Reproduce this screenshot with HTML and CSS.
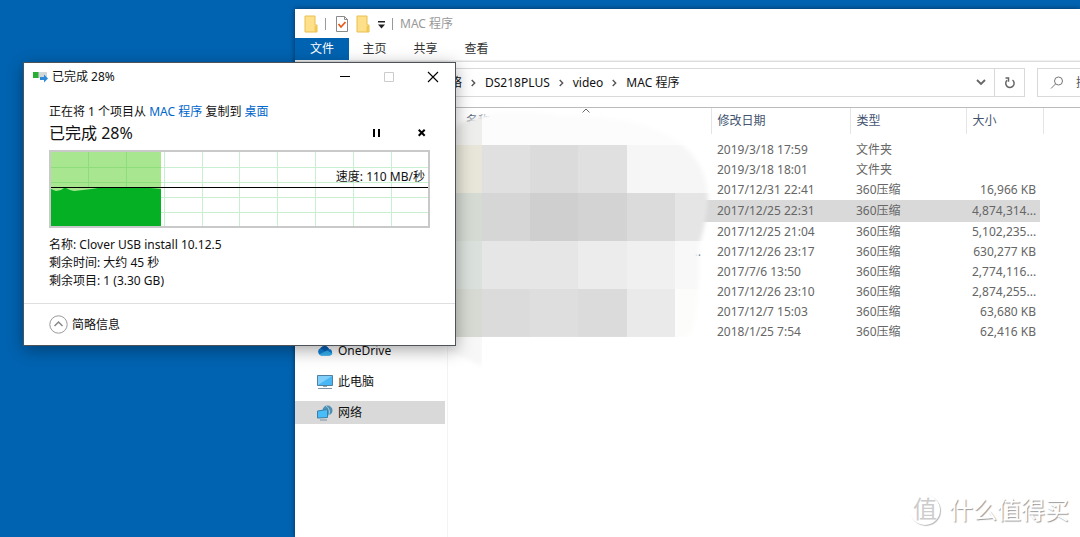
FILE: index.html
```html
<!DOCTYPE html>
<html lang="zh-CN">
<head>
<meta charset="utf-8">
<title>MAC 程序</title>
<link rel="stylesheet" href="styles.css">
</head>
<body>
<main class="desktop">
  <section class="explorer">
    <header class="titlebar">
      <svg class="folder" width="14" height="18" viewBox="0 0 14 18"><path d="M1 1h10v9h2v7H1z" fill="#ffe08a" stroke="#e8c04e"/><path d="M10.500 11h2.500v6h-2.500z" fill="#f2c94f"/></svg>
      <span class="bar"></span>
      <svg class="check" width="12" height="16" viewBox="0 0 12 16"><path d="M.5.5h8l3 3v12H.5z" fill="#fff" stroke="#8a8a8a"/><path d="M8.500.5v3h3" fill="none" stroke="#8a8a8a"/><path d="M2.500 8l2.500 3 4.500-5" fill="none" stroke="#e8591c" stroke-width="1.800"/></svg>
      <svg class="folder" width="14" height="18" viewBox="0 0 14 18"><path d="M1 1h10v9h2v7H1z" fill="#ffe08a" stroke="#e8c04e"/><path d="M10.500 11h2.500v6h-2.500z" fill="#f2c94f"/></svg>
      <svg class="more" width="7" height="8" viewBox="0 0 7 8"><path d="M0 0h7v1.500H0zM0 3.500h7L3.500 7.500z" fill="#222"/></svg>
      <span class="bar"></span>
      <span class="caption">MAC 程序</span>
    </header>
    <nav class="tabs">
      <button class="tab tab-file">文件</button>
      <button class="tab">主页</button>
      <button class="tab">共享</button>
      <button class="tab">查看</button>
    </nav>
    <div class="location">
      <div class="address">
        <button class="crumb">网络</button>
        <svg class="chev" width="5" height="8" viewBox="0 0 5 8"><path d="M.7 1l3 3-3 3" fill="none" stroke="#555" stroke-width="1.400"/></svg>
        <button class="crumb">DS218PLUS</button>
        <svg class="chev" width="5" height="8" viewBox="0 0 5 8"><path d="M.7 1l3 3-3 3" fill="none" stroke="#555" stroke-width="1.400"/></svg>
        <button class="crumb">video</button>
        <svg class="chev" width="5" height="8" viewBox="0 0 5 8"><path d="M.7 1l3 3-3 3" fill="none" stroke="#555" stroke-width="1.400"/></svg>
        <button class="crumb">MAC 程序</button>
        <button class="drop" aria-label="历史记录"><svg width="10" height="7" viewBox="0 0 10 7"><path d="M1 1l4 4 4-4" fill="none" stroke="#666" stroke-width="1.800"/></svg></button>
        <button class="refresh" aria-label="刷新"><svg width="12" height="13" viewBox="0 0 12 13"><path d="M3 3.800A4.200 4.200 0 1 0 8.500 3.500M1.500 1.500h3v3.700" transform="translate(0 .5)" fill="none" stroke="#666" stroke-width="1.500"/></svg></button>
      </div>
      <label class="search">
        <svg width="14" height="14" viewBox="0 0 14 14"><circle cx="8.500" cy="5" r="4" fill="none" stroke="#777"/><path d="M5.500 8L1 12.500" stroke="#777"/></svg>
        <input type="text" aria-label="搜索" placeholder="搜索">
      </label>
    </div>
    <div class="body">
      <aside class="side">
        <button class="place"><svg width="16" height="16" viewBox="0 0 16 16"><path d="M4 12.500a4 4 0 0 1-.5-7.500A5 5 0 0 1 12 6a3.300 3.300 0 0 1 .5 6.500z" fill="#0f7fd6"/><path d="M2 11.500l8-4 5.500 3a3 3 0 0 1-3 2H4z" fill="#35b1ee"/><path d="M3.500 5A5 5 0 0 1 12 6L8 8.200z" fill="#0a5fb4"/></svg>OneDrive</button>
        <button class="place"><svg width="16" height="16" viewBox="0 0 16 16"><path d="M.5 1.500h15v10H.5z" fill="#49b6f5" stroke="#52809f"/><path d="M1 2h14L1 11z" fill="#80d0fb"/><path d="M6 12h4v1H6z" fill="#8aa"/><path d="M1 14.500h14" stroke="#7d93a5"/></svg>此电脑</button>
        <button class="place place-on"><svg width="16" height="16" viewBox="0 0 16 16"><circle cx="10.500" cy="5.500" r="5" fill="#4f8fb3"/><path d="M9 1c3 2 4 5 3 9" stroke="#a9d6e8" fill="none"/><path d="M.5 6l10-1.500v8l-10 .5z" fill="#49bdf8" stroke="#3b7fa8"/><path d="M3 15h7" stroke="#7d93a5"/></svg>网络</button>
      </aside>
      <div class="files">
        <table>
          <colgroup><col class="c-name"><col class="c-date"><col class="c-type"><col class="c-size"></colgroup>
          <thead><tr><th>名称</th><th>修改日期</th><th>类型</th><th>大小</th></tr></thead>
          <tbody>
            <tr><td></td><td>2019/3/18 17:59</td><td>文件夹</td><td></td></tr>
            <tr><td></td><td>2019/3/18 18:01</td><td>文件夹</td><td></td></tr>
            <tr><td></td><td>2017/12/31 22:41</td><td>360压缩</td><td>16,966 KB</td></tr>
            <tr class="on"><td></td><td>2017/12/25 22:31</td><td>360压缩</td><td>4,874,314...</td></tr>
            <tr><td></td><td>2017/12/25 21:04</td><td>360压缩</td><td>5,102,235...</td></tr>
            <tr><td>..</td><td>2017/12/26 23:17</td><td>360压缩</td><td>630,277 KB</td></tr>
            <tr><td></td><td>2017/7/6 13:50</td><td>360压缩</td><td>2,774,116...</td></tr>
            <tr><td></td><td>2017/12/26 23:10</td><td>360压缩</td><td>2,874,255...</td></tr>
            <tr><td></td><td>2017/12/7 15:03</td><td>360压缩</td><td>63,680 KB</td></tr>
            <tr><td></td><td>2018/1/25 7:54</td><td>360压缩</td><td>62,416 KB</td></tr>
          </tbody>
        </table>
        <svg class="sort" width="8" height="5" viewBox="0 0 8 5"><path d="M.5 4.500L4 1l3.500 3.500" fill="none" stroke="#666"/></svg>
        <svg class="mosaic" width="264" height="260" viewBox="448 108 264 260">
          <defs>
            <filter id="soft" x="-5%" y="-5%" width="110%" height="110%"><feGaussianBlur stdDeviation="2"/></filter>
            <mask id="edge"><path d="M440 138Q462 118 495 112Q530 108 560 116Q640 114 680 143Q708 165 708 200Q706 225 699 245Q700 300 693 325Q690 340 675 340H483V366Q470 362 440 345z" fill="#fff" filter="url(#soft)"/></mask>
          </defs>
          <g mask="url(#edge)" shape-rendering="crispEdges">
            <path d="M448 108h34v37h-34z" fill="#eeeeed"/><path d="M482 108h230v37H482z" fill="#fcfcfc"/>
            <path d="M448 145h34v48h-34z" fill="#e8e6d9"/><path d="M482 145h48v48h-48zM578 145h49v48h-49z" fill="#e0e0e0"/><path d="M530 145h48v48h-48z" fill="#dbdbdb"/><path d="M627 145h85v48h-85z" fill="#f6f6f6"/>
            <path d="M448 193h34v48h-34z" fill="#d5dad3"/><path d="M482 193h48v48h-48z" fill="#d6d6d6"/><path d="M530 193h48v48h-48z" fill="#cfcfcf"/><path d="M578 193h49v48h-49z" fill="#d3d3d3"/><path d="M627 193h48v48h-48z" fill="#dbdbdb"/><path d="M675 193h37v48h-37z" fill="#e5e5e5"/>
            <path d="M448 241h34v48h-34z" fill="#dae0dc"/><path d="M482 241h96v48h-96z" fill="#e6e6e6"/><path d="M578 241h49v48h-49z" fill="#ececec"/><path d="M627 241h48v48h-48z" fill="#f0f0f0"/><path d="M675 241h37v48h-37z" fill="#f8f8f8"/>
            <path d="M448 289h34v48h-34z" fill="#d6dad2"/><path d="M482 289h48v48h-48zM578 289h49v48h-49z" fill="#dbdbdb"/><path d="M530 289h48v48h-48z" fill="#dedede"/><path d="M627 289h48v48h-48z" fill="#eaeaea"/><path d="M675 289h37v48h-37z" fill="#fcfcfa"/>
            <path d="M448 337h34v31h-34z" fill="#f7f7f7"/>
          </g>
        </svg>
      </div>
    </div>
  </section>

  <section class="dialog" role="dialog" aria-label="已完成 28%">
    <header class="dlg-title">
      <svg width="15" height="12" viewBox="0 0 15 12"><path d="M0 1h14v6H0z" fill="#d3d7da"/><path d="M0 1h5.500v6H0z" fill="#27b034"/><path d="M7 6h4V3.500l4 4-4 4V9H7z" fill="#2e8ad8"/></svg>
      <span class="dlg-name">已完成 28%</span>
      <button class="win" aria-label="最小化"><svg width="12" height="12" viewBox="0 0 12 12"><path d="M1 5.500h10" stroke="#000"/></svg></button>
      <button class="win" aria-label="最大化"><svg width="12" height="12" viewBox="0 0 12 12"><path d="M1.500 1.500h9v9h-9z" fill="none" stroke="#ccc"/></svg></button>
      <button class="win" aria-label="关闭"><svg width="12" height="12" viewBox="0 0 12 12"><path d="M1 1l10 10M11 1L1 11" stroke="#000" stroke-width="1.100"/></svg></button>
    </header>
    <div class="dlg-main">
      <p class="what">正在将 1 个项目从 <a href="#">MAC 程序</a> 复制到 <a href="#">桌面</a></p>
      <div class="progress">
        <h1>已完成 28%</h1>
        <button class="act" aria-label="暂停"><svg width="8" height="8" viewBox="0 0 8 8"><path d="M0 0h2v8H0zM5 0h2v8H5z" fill="#000"/></svg></button>
        <button class="act" aria-label="取消"><svg width="8" height="8" viewBox="0 0 8 8"><path d="M.7.7l6 6M6.700.7l-6 6" stroke="#000" stroke-width="2"/></svg></button>
      </div>
      <div class="chart">
        <svg viewBox="0 0 377 74" preserveAspectRatio="none">
          <path d="M37.500 0v74M75.500 0v74M113.500 0v74M151.500 0v74M188.500 0v74M226.500 0v74M264.500 0v74M302.500 0v74M340.500 0v74M0 15.500h377M0 30.500h377M0 45.500h377M0 60.500h377" stroke="#c8efcf"/>
          <path d="M0 0h110v74H0z" fill="#a8e690"/>
          <path d="M37.500 0v36M75.500 0v36M0 15.500h110M0 30.500h110" stroke="#8edd7c"/>
          <path d="M0 37l5 2 5-1 3-2h2l4 2 4 1 18-2 6-1h52l11 1v37H0z" fill="#06b025"/>
          <path d="M0 35.500h377" stroke="#000"/>
        </svg>
        <span class="speed">速度: 110 MB/秒</span>
      </div>
      <p class="info">名称: Clover USB install 10.12.5</p>
      <p class="info">剩余时间: 大约 45 秒</p>
      <p class="info">剩余项目: 1 (3.30 GB)</p>
    </div>
    <footer class="dlg-foot">
      <button class="less"><svg width="19" height="19" viewBox="0 0 19 19"><circle cx="9.500" cy="9.500" r="8.700" fill="#fff" stroke="#999"/><path d="M5.500 11l4-4 4 4" fill="none" stroke="#888" stroke-width="1.500"/></svg>简略信息</button>
    </footer>
  </section>

  <div class="mark"><span class="seal">值</span><span>什么值得买</span></div>
</main>
</body>
</html>
```

FILE: styles.css
```css
* { box-sizing: border-box; }
body {
  margin: 0;
  font: 12px/18px "Noto Sans", "Noto Sans CJK SC", sans-serif;
  color: #111;
}
button {
  font: inherit;
  color: inherit;
  background: none;
  border: 0;
  padding: 0;
}
svg { display: block; flex: none; }
p, h1 { margin: 0; }
.desktop {
  position: relative;
  height: 100vh;
  overflow: hidden;
  background: #0063b1;
}

.explorer {
  position: absolute;
  left: 295px;
  right: 0;
  top: 9px;
  bottom: 0;
  display: flex;
  flex-direction: column;
  background: #fff;
  box-shadow: 0 0 5px rgba(0, 0, 0, .5);
}
.titlebar {
  display: flex;
  align-items: center;
  height: 29px;
  padding-left: 9px;
}
.bar { width: 1px; height: 12px; background: #999; margin: 0 7px; }
.check { margin: 0 8px 0 3px; }
.more { margin: 2px 0 0 8px; }
.caption { color: #999; }
.tabs {
  display: flex;
  height: 23px;
  border-bottom: 1px solid #f0f0f0;
}
.tab { width: 51px; height: 22px; color: #333; }
.tab-file { width: 54px; background: #0063b1; color: #fff; }
.location {
  display: flex;
  gap: 12px;
  height: 46px;
  padding: 6px 0 0 110px;
  border-top: 1px solid #ddd;
}
.address {
  flex: 1;
  display: flex;
  align-items: center;
  height: 29px;
  padding-left: 32px;
  border: 1px solid #d9d9d9;
}
.chev { margin: 0 9px; }
.drop { margin-left: auto; padding: 8px; }
.refresh {
  display: flex;
  align-items: center;
  justify-content: center;
  width: 30px;
  height: 27px;
  border-left: 1px solid #d9d9d9;
}
.search {
  display: flex;
  align-items: center;
  gap: 12px;
  width: 43px;
  height: 29px;
  padding-left: 12px;
  border: 1px solid #d9d9d9;
  border-right: 0;
  overflow: hidden;
}
.search input {
  flex: none;
  width: 120px;
  border: 0;
  padding: 0;
  font: inherit;
}
.search input::placeholder { color: #555; opacity: 1; }
.body {
  flex: 1;
  display: flex;
}
.side {
  width: 153px;
  padding: 232px 2px 0 0;
  border-right: 1px solid #f3f3f3;
}
.place {
  display: flex;
  align-items: center;
  gap: 5px;
  width: 100%;
  height: 23px;
  margin-bottom: 8px;
  padding-left: 22px;
}
.place-on { background: #d9d9d9; }
.files {
  position: relative;
  flex: 1;
  border-top: 1px solid #bbb;
}
table {
  table-layout: fixed;
  width: 595px;
  border-collapse: collapse;
  line-height: 16px;
}
.c-name { width: 263px; }
.c-date { width: 139px; }
.c-type { width: 116px; }
.c-size { width: 77px; }
th, td { padding: 0 6px; text-align: left; font-weight: 400; }
th {
  height: 26px;
  color: #44546f;
  border-right: 1px solid #e5e5e5;
}
th:first-child { padding-left: 18px; }
tbody::before { content: ""; display: block; height: 6px; }
td { height: 20px; color: #666; }
td:first-child { text-align: right; padding-right: 10px; color: #223; }
td:last-child { text-align: right; padding-right: 7px; }
.on td { background: #d9d9d9; height: 22px; }
.on td:last-child {
  background: linear-gradient(to left, #fff 3px, #d9d9d9 3px);
}
.sort { position: absolute; left: 134px; top: 0; }
.mosaic { position: absolute; left: 0; top: 0; }

.dialog {
  position: absolute;
  left: 23px;
  top: 62px;
  width: 433px;
  background: #fff;
  border: 1px solid #4d5358;
  box-shadow: 0 4px 16px rgba(0, 0, 0, .35);
}
.dlg-title {
  display: flex;
  align-items: center;
  height: 28px;
  padding-left: 9px;
}
.dlg-name { flex: 1; padding-left: 4px; }
.win { display: flex; justify-content: center; width: 44px; }
.dlg-main { padding: 12px 25px 13px; }
.what { height: 18px; }
a { color: #0066cc; text-decoration: none; }
.progress {
  display: flex;
  align-items: center;
  height: 24px;
  margin-bottom: 5px;
}
h1 { flex: 1; font-size: 16px; line-height: 24px; font-weight: 400; }
.act { display: flex; justify-content: center; width: 8px; margin: 0 4px 0 33px; }
.chart {
  position: relative;
  height: 78px;
  margin-bottom: 8px;
  border: 2px solid #c9c9c9;
}
.chart svg { width: 100%; height: 100%; }
.speed { position: absolute; right: 3px; top: 16px; }
.info { height: 18px; }
.dlg-foot {
  height: 42px;
  padding: 11px 25px;
  border-top: 1px solid #dfdfdf;
}
.less { display: flex; align-items: center; gap: 4px; }

.mark {
  position: absolute;
  right: 11px;
  bottom: 11px;
  display: flex;
  align-items: center;
  gap: 9px;
  font-size: 24px;
  line-height: 32px;
  color: #fff;
  text-shadow: 1px 1px 1px #999;
}
.seal {
  width: 30px;
  height: 30px;
  line-height: 28px;
  text-align: center;
  border-radius: 50%;
  color: #ccc;
  text-shadow: none;
  box-shadow: 1px 1px 1px #bbb;
}
```
